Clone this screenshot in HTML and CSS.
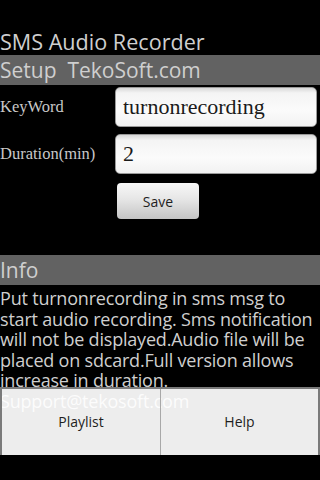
FILE: index.html
```html
<!DOCTYPE html>
<html>
<head>
<meta charset="utf-8">
<link rel="stylesheet" href="styles.css">
</head>
<body>
<div class="screen">
  <div class="title">SMS Audio Recorder</div>
  <div class="section">Setup&nbsp; TekoSoft.com</div>
  <div class="form">
    <div class="label">KeyWord</div>
    <div class="input">turnonrecording</div>
    <div class="label">Duration(min)</div>
    <div class="input">2</div>
    <div></div>
    <div class="actions"><div class="btn">Save</div></div>
  </div>
  <div class="section info-head">Info</div>
  <div class="info">Put turnonrecording in sms msg to start audio recording. Sms notification will not be displayed.Audio file will be placed on sdcard.Full version allows increase in duration.<br>Support@tekosoft.com</div>
  <div class="menu">
    <div class="menu-item">Playlist</div>
    <div class="menu-item">Help</div>
  </div>
</div>
</body>
</html>
```
FILE: styles.css
```css
html, body {
  margin: 0;
  padding: 0;
  background: #000;
}
.screen {
  position: relative;
  width: 320px;
  height: 480px;
  overflow: hidden;
  background: #000;
  font-family: "Open Sans", "DejaVu Sans", sans-serif;
  color: #cfcfcf;
}
.title {
  margin-top: 28px;
  height: 27px;
  line-height: 27px;
  font-size: 21.6px;
}
.section {
  height: 30px;
  line-height: 30px;
  background: #626262;
  font-size: 21px;
  color: #cfcfcf;
}
.form {
  display: grid;
  grid-template-columns: 115px 202px;
  row-gap: 7px;
  padding-top: 2px;
}
.label {
  font-family: "Liberation Serif", "DejaVu Serif", serif;
  font-size: 16.5px;
  color: #c8c8c8;
  display: flex;
  align-items: center;
}
.input {
  height: 38px;
  border: 1px solid #9a9a9a;
  border-radius: 5px;
  background: linear-gradient(#d8d8d8 0px, #f4f4f4 5px, #fbfbfb 60%, #f2f2f2 100%);
  font-family: "Liberation Serif", "DejaVu Serif", serif;
  font-size: 22px;
  color: #1a1a1a;
  display: flex;
  align-items: center;
  padding-left: 7px;
}
.actions {
  padding-top: 2px;
  padding-left: 2px;
  height: 46px;
}
.btn {
  width: 82px;
  height: 36px;
  border-radius: 4px;
  background: linear-gradient(#f8f8f8, #e6e6e6 45%, #c4c4c4);
  color: #1e1e1e;
  font-size: 14px;
  display: flex;
  align-items: center;
  justify-content: center;
}
.info-head {
  margin-top: 26px;
}
.info {
  font-size: 18px;
  line-height: 20.5px;
  letter-spacing: -0.2px;
  color: #cfcfcf;
  padding-top: 3px;
}
.menu {
  position: absolute;
  left: 0;
  top: 387px;
  width: 316px;
  height: 66px;
  border: 2px solid #7a7a7a;
  border-bottom: 0;
  display: grid;
  grid-template-columns: 1fr 1fr;
  background: rgba(255, 255, 255, 0.93);
}
.menu-item {
  display: flex;
  align-items: center;
  justify-content: center;
  font-size: 14px;
  color: #1e1e1e;
  padding-bottom: 2px;
}
.menu-item + .menu-item {
  border-left: 1px solid #a8a8a8;
}
```
